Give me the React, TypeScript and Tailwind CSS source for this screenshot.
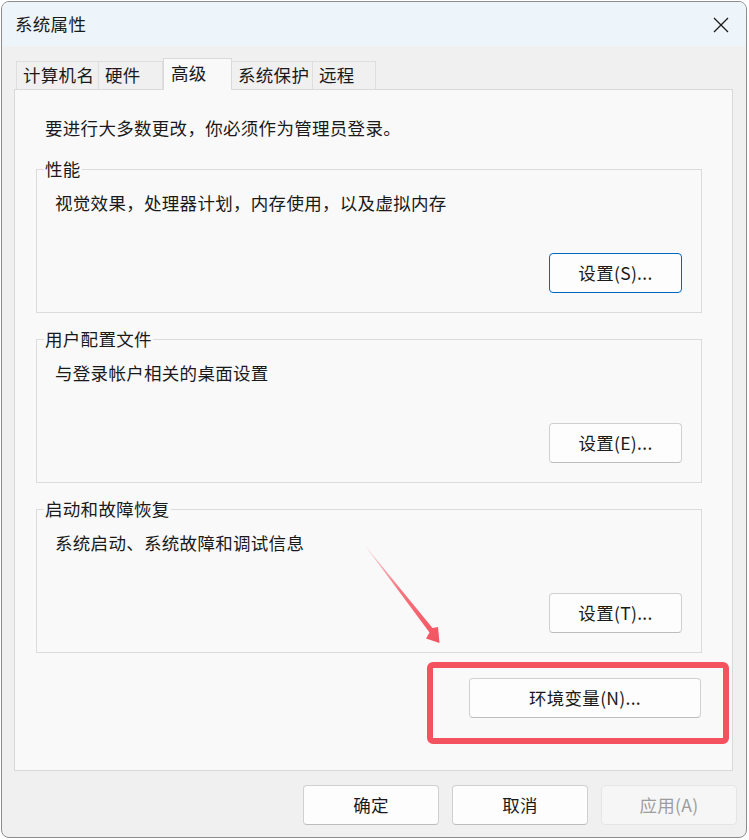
import React from 'react'

const font = { fontFamily: '"Microsoft YaHei UI", "Noto Sans CJK SC", "Noto Sans", sans-serif' }

const tabs = [
  { label: '计算机名', w: 'w-[83px]' },
  { label: '硬件', w: 'w-[65px]' },
  { label: '高级', w: 'w-[69px]', active: true },
  { label: '系统保护', w: 'w-[82px]' },
  { label: '远程', w: 'w-[64px]' },
]

const groups = [
  { title: '性能', desc: '视觉效果，处理器计划，内存使用，以及虚拟内存', btn: '设置(S)...', primary: true },
  { title: '用户配置文件', desc: '与登录帐户相关的桌面设置', btn: '设置(E)...' },
  { title: '启动和故障恢复', desc: '系统启动、系统故障和调试信息', btn: '设置(T)...' },
]

function Button({ children, className = '', primary = false, disabled = false }: { children: React.ReactNode; className?: string; primary?: boolean; disabled?: boolean }) {
  return (
    <button
      className={
        'flex items-center justify-center rounded-[4px] border text-[17.5px] leading-none ' +
        (disabled
          ? 'border-[#e5e5e5] bg-[#f6f6f6] text-[#9d9d9d] '
          : primary
          ? 'border-[#0067c0] bg-[#fdfdfd] text-[#1a1a1a] '
          : 'border-[#d0d0d0] border-b-[#bdbdbd] bg-[#fdfdfd] text-[#1a1a1a] ') +
        className
      }
    >
      {children}
    </button>
  )
}

export default function App() {
  return (
    <div className="h-[840px] w-[749px] overflow-hidden bg-white tracking-[0.3px]" style={font}>
      <div className="relative ml-[1px] mt-[1px] flex h-[837px] w-[746px] flex-col overflow-hidden rounded-[8px] border border-[#8c8c8c] bg-[#f0f0f0]">
        {/* Title bar */}
        <div className="flex h-[44px] items-center justify-between bg-[#edf4fa] pl-[13px] pr-[17px]">
          <span className="text-[17.5px] text-[#1a1a1a]">系统属性</span>
          <svg width="16" height="16" viewBox="0 0 16 16" className="mt-[1px]">
            <path d="M1 1 L15 15 M15 1 L1 15" stroke="#1a1a1a" strokeWidth="1.3" fill="none" />
          </svg>
        </div>

        <div className="flex flex-1 flex-col pl-[12px] pr-[13px] pt-[12px]">
          {/* Tabs */}
          <div className="flex h-[31px] items-end pl-[2px]">
            {tabs.map((t) =>
              t.active ? (
                <div
                  key={t.label}
                  className={`relative z-10 -mb-px flex h-[32px] items-start border border-b-0 border-[#dadada] bg-[#f9f9f9] pl-[7px] pt-[1px] text-[17.5px] text-[#1a1a1a] ${t.w}`}
                >
                  {t.label}
                </div>
              ) : (
                <div
                  key={t.label}
                  className={`-ml-px flex h-[28px] items-center border border-b-0 border-[#dedede] bg-[#f0f0f0] pl-[6px] text-[17.5px] text-[#1a1a1a] first:ml-0 ${t.w}`}
                >
                  {t.label}
                </div>
              )
            )}
          </div>

          {/* Panel */}
          <div className="flex h-[682px] flex-col border border-[#d9d9d9] bg-[#f9f9f9] pl-[21px] pr-[30px] pt-[26px]">
            <p className="pl-[9px] text-[17.5px] leading-[24px] text-[#1a1a1a]">要进行大多数更改，你必须作为管理员登录。</p>

            <div className="mt-[17px] flex flex-col gap-[14px]">
              {groups.map((g) => (
                <fieldset key={g.title} className="h-[156px] border border-[#dcdcdc]">
                  <legend className="ml-[7px] px-[1px] text-[17.5px] leading-[24px] text-[#1a1a1a]">{g.title}</legend>
                  <p className="mt-[10px] pl-[18px] text-[17.5px] leading-[24px] text-[#1a1a1a]">{g.desc}</p>
                  <div className="mt-[38px] flex justify-end pr-[19px]">
                    <Button primary={g.primary} className="h-[40px] w-[133px]">
                      {g.btn}
                    </Button>
                  </div>
                </fieldset>
              ))}
            </div>

            <div className="mt-[25px] flex justify-end pr-px">
              <Button className="h-[40px] w-[232px]">环境变量(N)...</Button>
            </div>
          </div>

          {/* Dialog buttons */}
          <div className="mr-[-4px] mt-[14px] flex justify-end gap-[13px]">
            <Button className="h-[40px] w-[136px]">确定</Button>
            <Button className="h-[40px] w-[136px]">取消</Button>
            <Button disabled className="h-[40px] w-[136px]">应用(A)</Button>
          </div>
        </div>

        {/* Annotation: red highlight box */}
        <div className="pointer-events-none absolute left-[425px] top-[660px] h-[82px] w-[302px] rounded-[6px] border-[6px] border-[#f4525f]" />

        {/* Annotation: arrow */}
        <svg className="pointer-events-none absolute left-0 top-0" width="746" height="837" viewBox="1 1 746 837">
          <defs>
            <linearGradient id="arrowGrad" x1="362" y1="542" x2="438" y2="642" gradientUnits="userSpaceOnUse">
              <stop offset="0" stopColor="#f4525f" stopOpacity="0.15" />
              <stop offset="0.5" stopColor="#f4525f" stopOpacity="0.8" />
              <stop offset="1" stopColor="#f4525f" />
            </linearGradient>
          </defs>
          <polygon
            points="362,542 431.5,627 437,626 438.5,642 425,637.5 428.5,631.5"
            fill="url(#arrowGrad)"
          />
        </svg>
      </div>
    </div>
  )
}
